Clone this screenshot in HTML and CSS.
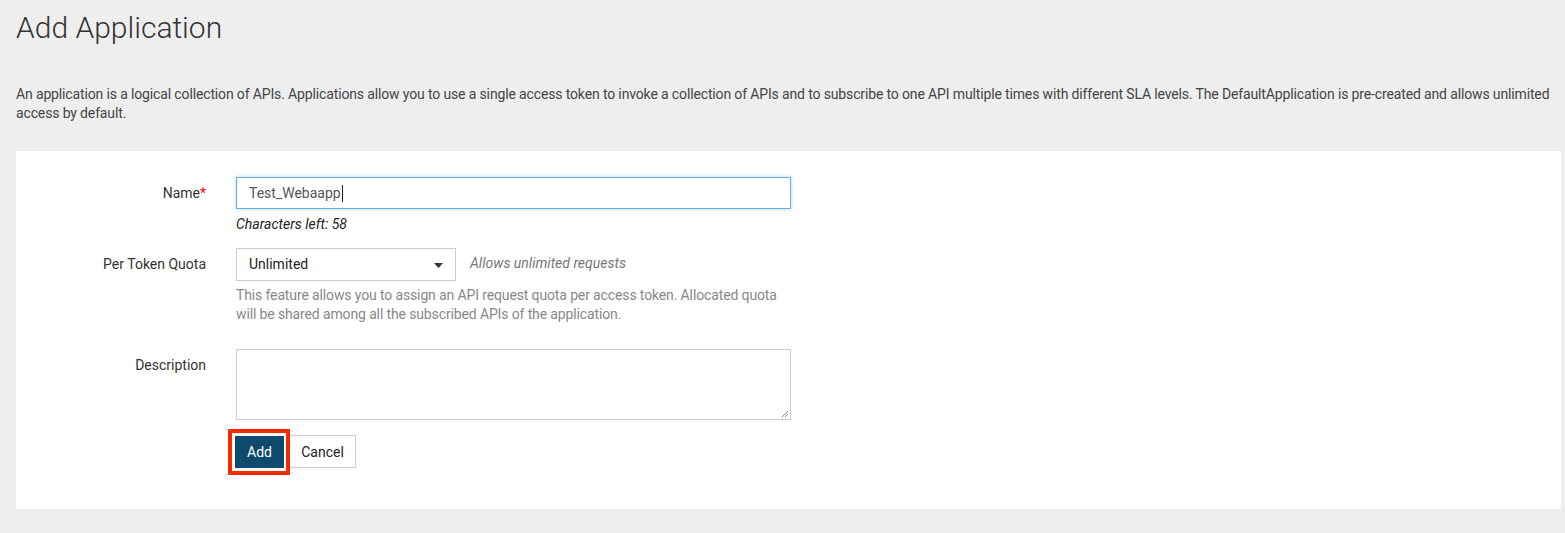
FILE: index.html
```html
<!DOCTYPE html>
<html>
<head>
<meta charset="utf-8">
<link rel="stylesheet" href="styles.css">
</head>
<body>
<div class="page">
  <h1 class="title">Add Application</h1>
  <p class="intro">An application is a logical collection of APIs. Applications allow you to use a single access token to invoke a collection of APIs and to subscribe to one API multiple times with different SLA levels. The DefaultApplication is pre-created and allows unlimited access by default.</p>
  <div class="panel">
    <div class="form-row">
      <label class="label">Name<span class="req">*</span></label>
      <div class="field">
        <div class="input focused"><span>Test_Webaapp</span><span class="caret"></span></div>
        <div class="chars">Characters left: 58</div>
      </div>
    </div>
    <div class="form-row row-quota">
      <label class="label">Per Token Quota</label>
      <div class="field">
        <div class="select-line">
          <div class="select"><span>Unlimited</span><svg class="arrow" width="9" height="5" viewBox="0 0 9 5"><path d="M0 0h9L4.5 5z" fill="#333"/></svg></div>
          <span class="quota-note">Allows unlimited requests</span>
        </div>
        <div class="help">This feature allows you to assign an API request quota per access token. Allocated quota will be shared among all the subscribed APIs of the application.</div>
      </div>
    </div>
    <div class="form-row row-desc">
      <label class="label">Description</label>
      <div class="field">
        <div class="textarea"><svg class="grip" width="8" height="8" viewBox="0 0 8 8"><path d="M7 1L1 7M7 4L4 7" stroke="#888" stroke-width="1"/></svg></div>
        <div class="actions">
          <span class="highlight"><button class="btn btn-primary">Add</button></span>
          <button class="btn btn-default">Cancel</button>
        </div>
      </div>
    </div>
  </div>
</div>
</body>
</html>
```
FILE: styles.css
```css
* { box-sizing: border-box; }
html, body { margin: 0; padding: 0; }
body {
  background: #eeeeee;
  font-family: Roboto, "Noto Sans", Arial, sans-serif;
  font-size: 14px;
  line-height: 20px;
  color: #333;
  width: 1565px;
  height: 533px;
  overflow: hidden;
}
.page { padding: 0 4px 0 16px; }
.title {
  font-size: 30px;
  font-weight: 300;
  line-height: 33px;
  margin: 11px 0 0 0;
  color: #333;
}
.intro {
  margin: 41px -4px 28px 0;
  line-height: 19px;
  color: #444;
  letter-spacing: -0.14px;
}
.panel {
  background: #fff;
  padding: 26px 0 41px 0;
}
.form-row {
  display: grid;
  grid-template-columns: 190px 555px;
  column-gap: 30px;
}
.label {
  text-align: right;
  padding-top: 6px;
  color: #333;
}
.req { color: #ff0000; }
.input {
  height: 32px;
  border: 1px solid #ccc;
  padding: 6px 12px;
  color: #555;
  display: flex;
  align-items: center;
}
.input.focused {
  border-color: #66afe9;
  box-shadow: 0 0 4px rgba(102,175,233,0.5);
}
.caret {
  display: inline-block;
  width: 1px;
  height: 17px;
  background: #222;
  margin-left: 1px;
}
.chars {
  font-style: italic;
  margin-top: 5px;
  color: #222;
}
.row-quota { margin-top: 14px; }
.select-line {
  display: flex;
  align-items: center;
  gap: 14px;
}
.select {
  width: 220px;
  height: 33px;
  border: 1px solid #ccc;
  padding: 0 12px;
  display: flex;
  align-items: center;
  justify-content: space-between;
  color: #222;
}
.select span { margin-top: -1px; }
.arrow { margin-right: 0; margin-top: 1px; }
.quota-note {
  font-style: italic;
  color: #777;
  margin-top: -3px;
}
.help {
  color: #888;
  margin-top: 5px;
  line-height: 19px;
  letter-spacing: -0.13px;
}
.row-desc { margin-top: 25px; }
.textarea {
  height: 71px;
  border: 1px solid #ccc;
  position: relative;
}
.grip { position: absolute; right: 1px; bottom: 1px; }
.actions {
  margin-top: 15px;
  display: flex;
  align-items: center;
}
.highlight {
  position: relative;
  display: inline-flex;
  margin-left: -1px;
  margin-right: 5px;
}
.highlight::after {
  content: "";
  position: absolute;
  left: -7px;
  right: -6px;
  top: -7px;
  bottom: -7px;
  border: 4px solid #f52a00;
}
.btn {
  font-family: inherit;
  font-size: 14px;
  line-height: 20px;
  height: 32px;
  margin: 0;
  border-radius: 0;
  cursor: pointer;
}
.btn-primary {
  background: #0d4a6e;
  color: #fff;
  border: 1px solid #0d4a6e;
  width: 49px;
  padding: 0;
}
.btn-default {
  background: #fff;
  color: #222;
  border: 1px solid #ccc;
  width: 67px;
  height: 33px;
  padding: 0;
}
```
